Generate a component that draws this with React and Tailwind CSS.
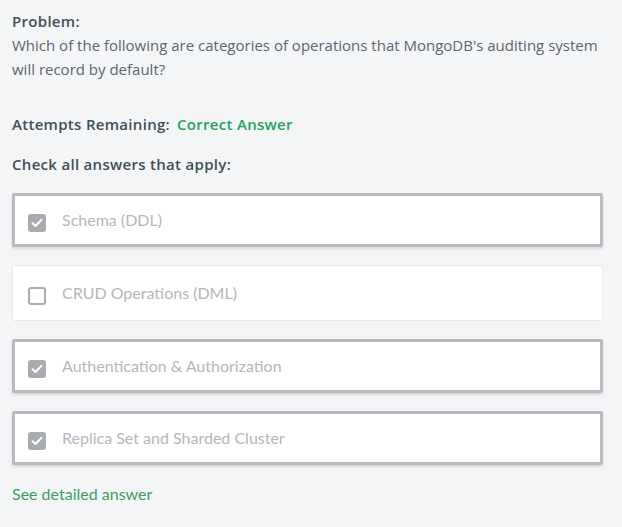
import React from "react";

/* ================= Answer Options ================= */

const OPTIONS = [
  { label: "Schema (DDL)", checked: true },
  { label: "CRUD Operations (DML)", checked: false },
  { label: "Authentication & Authorization", checked: true },
  { label: "Replica Set and Sharded Cluster", checked: true },
];

const LIGHT = { fontFamily: "Lato, 'Liberation Sans', sans-serif" };

export default function App() {
  return (
    <div
      className="min-h-[527px] w-[622px] bg-[#f4f5f7] px-3 pt-[9px] text-[#3d4f58]"
      style={{ fontFamily: "'Open Sans', 'Liberation Sans', sans-serif" }}
    >
      {/* ===== Problem ===== */}
      <div className="text-[15px] leading-6">
        <div className="font-semibold tracking-[0.3px]">Problem:</div>
        <p className="text-[#5a6670]">
          Which of the following are categories of operations that MongoDB's
          auditing system will record by default?
        </p>
      </div>

      {/* ===== Attempts ===== */}
      <div className="mt-[31px] flex gap-[7px] text-[15px] font-semibold leading-6 tracking-[0.3px]">
        <span>Attempts Remaining:</span>
        <span className="text-[#21a55a]">Correct Answer</span>
      </div>

      <div className="mt-4 text-[15px] font-semibold leading-6 tracking-[0.3px]">
        Check all answers that apply:
      </div>

      {/* ===== Options ===== */}
      <div className="mt-[17px] flex w-[591px] flex-col gap-[18px]">
        {OPTIONS.map((o) => (
          <Option key={o.label} {...o} />
        ))}
      </div>

      <div
        className="mt-[17px] text-[16px] leading-6 text-[#3aa05f]"
        style={LIGHT}
      >
        See detailed answer
      </div>
    </div>
  );
}

/* ================= Reusable Components ================= */

function Option({ label, checked }) {
  return (
    <div
      className={
        checked
          ? "flex h-[54px] items-center rounded-[2px] border-[3px] border-[#b8bbbf] bg-white pl-[13px] shadow-[0_2px_3px_rgba(0,0,0,0.12)]"
          : "flex h-[56px] items-center rounded-[2px] border border-[#e7e9eb] bg-white pl-[15px]"
      }
    >
      <Checkbox checked={checked} />
      <span className="ml-[16px] text-[16px] text-[#b4b7ba]" style={LIGHT}>
        {label}
      </span>
    </div>
  );
}

function Checkbox({ checked }) {
  if (checked) {
    return (
      <span className="mt-[6px] flex h-[18px] w-[18px] items-center justify-center rounded-[3px] bg-[#a8abaf]">
        <svg width="12" height="10" viewBox="0 0 12 10" fill="none">
          <path
            d="M1.5 5.2 L4.5 8 L10.5 1.8"
            stroke="white"
            strokeWidth="2"
            strokeLinecap="round"
            strokeLinejoin="round"
          />
        </svg>
      </span>
    );
  }
  return (
    <span className="mt-[6px] block h-[18px] w-[18px] rounded-[3px] border-2 border-[#a8abaf] bg-white" />
  );
}
